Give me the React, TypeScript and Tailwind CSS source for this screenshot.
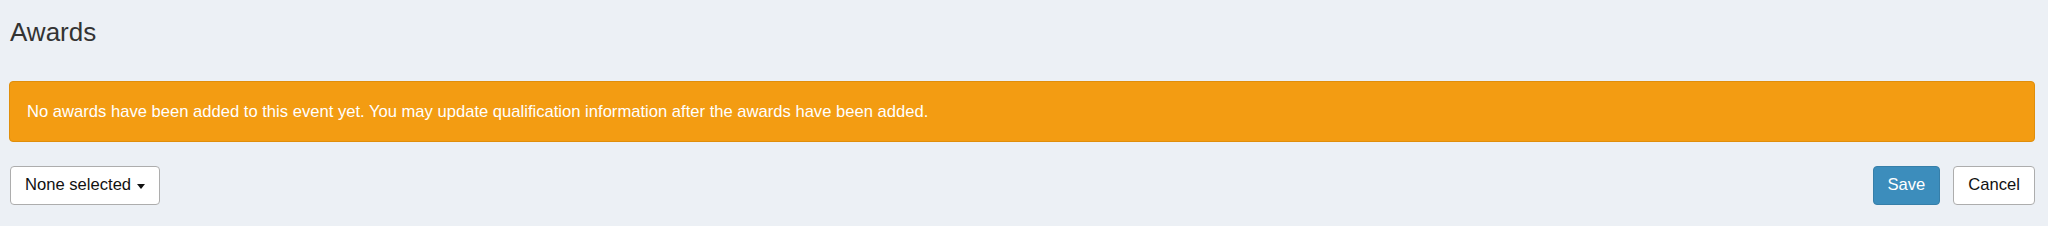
import React from 'react';

export default function App() {
  return (
    <div
      className="min-h-[226px] bg-[#ecf0f5] pl-[9px] pr-[13px] pt-[18px]"
      style={{ fontFamily: '"Liberation Sans", Arial, sans-serif' }}
    >
      <h1 className="pl-[1px] text-[26px] leading-[29px] font-normal text-[#333]">Awards</h1>

      <div className="mt-[34px] flex h-[61px] items-center rounded-[4px] border border-[#e08e0b] bg-[#f39c12] px-[17px] pt-[1px] text-[16.6px] text-white">
        No awards have been added to this event yet. You may update qualification information after the awards have
        been added.
      </div>

      <div className="mt-[24px] flex items-center justify-between">
        <button className="ml-[1px] flex h-[39px] items-center gap-[6px] rounded-[4px] border border-[#adadad] bg-white px-[14px] text-[16.6px] text-[#111]">
          None selected
          <svg width="8" height="5" viewBox="0 0 8 5" className="mt-[1px]">
            <path d="M0 0 H8 L4 5 Z" fill="#111" />
          </svg>
        </button>
        <div className="flex items-center gap-[13px]">
          <button className="h-[39px] rounded-[4px] border border-[#367fa9] bg-[#3c8dbc] px-[14px] text-[16.6px] text-white">
            Save
          </button>
          <button className="h-[39px] rounded-[4px] border border-[#adadad] bg-white px-[14px] text-[16.6px] text-[#111]">
            Cancel
          </button>
        </div>
      </div>
    </div>
  );
}
